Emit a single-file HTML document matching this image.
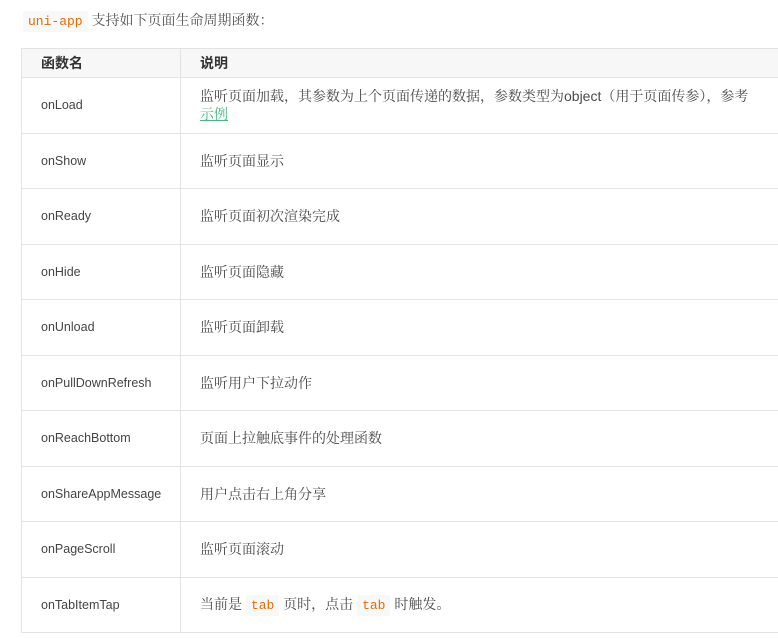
<!DOCTYPE html>
<html><head><meta charset="utf-8"><style>
body{margin:0;background:#fff;font-family:"Liberation Sans","Noto Serif CJK SC",sans-serif;color:#4a4a4a;font-size:14px;width:778px;height:638px;overflow:hidden;position:relative}
.intro{position:absolute;left:23px;top:9px;font-size:14px;line-height:22px;color:#555}
code{font-family:"Liberation Mono",monospace;color:#e96900;background:#f8f8f8;padding:3px 5px;border-radius:2px;font-size:13px}
table{position:absolute;left:21px;top:48px;border-collapse:collapse;width:770px}
td,th{border:1px solid #e3e3e3;padding:0 0 0 19px;text-align:left;vertical-align:middle}
th{height:28px;background:#f7f7f7;font-weight:bold;color:#333;font-size:14px;font-family:"Noto Sans CJK SC",sans-serif}
td{height:54.5px;line-height:18px}
td:first-child{font-size:12.5px;color:#444}
td:first-child,th:first-child{width:139px}
a{color:#42b983;text-decoration:underline}
</style></head><body>
<div class="intro"><code>uni-app</code> 支持如下页面生命周期函数：</div>
<table>
<tr><th>函数名</th><th>说明</th></tr>
<tr><td>onLoad</td><td>监听页面加载，其参数为上个页面传递的数据，参数类型为object（用于页面传参），参考<br><a>示例</a></td></tr>
<tr><td>onShow</td><td>监听页面显示</td></tr>
<tr><td>onReady</td><td>监听页面初次渲染完成</td></tr>
<tr><td>onHide</td><td>监听页面隐藏</td></tr>
<tr><td>onUnload</td><td>监听页面卸载</td></tr>
<tr><td>onPullDownRefresh</td><td>监听用户下拉动作</td></tr>
<tr><td>onReachBottom</td><td>页面上拉触底事件的处理函数</td></tr>
<tr><td>onShareAppMessage</td><td>用户点击右上角分享</td></tr>
<tr><td>onPageScroll</td><td>监听页面滚动</td></tr>
<tr><td>onTabItemTap</td><td>当前是 <code>tab</code> 页时，点击 <code>tab</code> 时触发。</td></tr>
</table>
</body></html>
